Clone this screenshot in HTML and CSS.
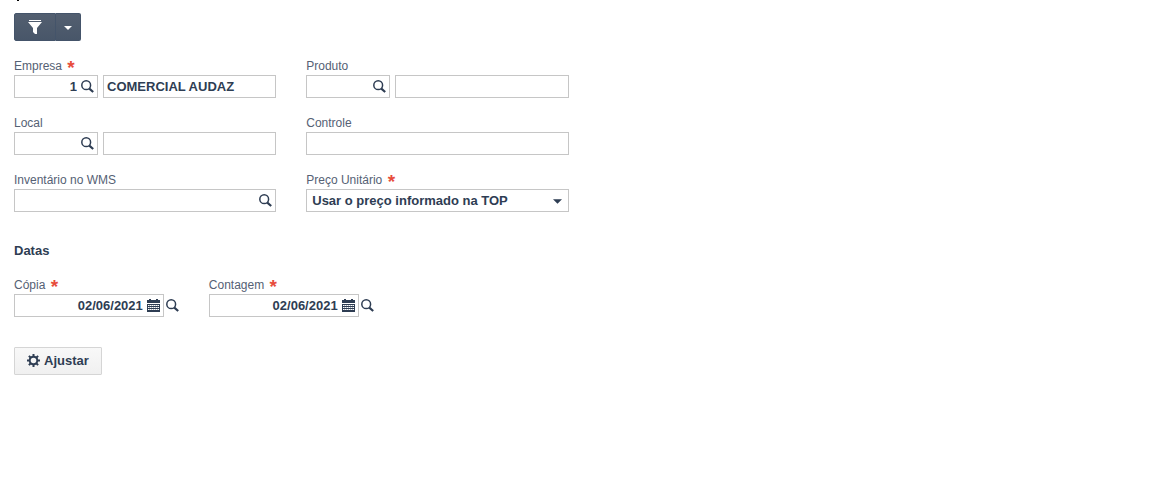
FILE: index.html
```html
<!DOCTYPE html>
<html lang="pt-BR">

<head>
    <meta charset="UTF-8">
    <meta name="viewport" content="width=device-width, initial-scale=1.0">
    <title>Ajuste de Estoque</title>
    <link rel="stylesheet" href="styles.css">
</head>

<body>
    <svg width="0" height="0" class="defs">
        <symbol id="search" viewBox="0 0 13 13">
            <circle cx="5.2" cy="5.2" r="4.4" fill="none" stroke="currentColor" stroke-width="1.5" />
            <path d="M8.3 8.6l3.9 3.4" fill="none" stroke="currentColor" stroke-width="2.2" />
        </symbol>
        <symbol id="calendar" viewBox="0 0 13 13">
            <path d="M0 1h2V0h2v1h5V0h2v1h2v3H0z" fill="currentColor" />
            <path d="M0 5h13v8H0z" fill="currentColor" />
            <path d="M1 6.5h11M1 8.5h11M1 10.5h11" stroke="#fff" stroke-width="1" stroke-dasharray="1.6 .4" />
        </symbol>
    </svg>

    <div class="mark"></div>

    <div class="toolbar">
        <button type="button" class="btn-dark btn-filter" aria-label="Filtro">
            <svg width="14" height="14" viewBox="0 0 14 14">
                <path d="M1 0h12v1H1zM0 2h14L9 8v6H7l-2-2V8z" fill="#fff" />
            </svg>
        </button>
        <button type="button" class="btn-dark btn-caret" aria-label="Mais filtros">
            <svg width="8" height="4" viewBox="0 0 8 4"><path d="M0 0h8L4 4z" fill="#fff" /></svg>
        </button>
    </div>

    <form>
        <div class="fields">
            <div class="field">
                <label for="empresa">Empresa <span class="req">*</span></label>
                <div class="pair">
                    <div class="box code">
                        <input type="text" id="empresa" class="right" value="1">
                        <button type="button" class="icon" aria-label="Pesquisar empresa"><svg><use href="#search" /></svg></button>
                    </div>
                    <div class="box"><input type="text" value="COMERCIAL AUDAZ" aria-label="Nome da empresa"></div>
                </div>
            </div>
            <div class="field">
                <label for="produto">Produto</label>
                <div class="pair">
                    <div class="box code">
                        <input type="text" id="produto" class="right">
                        <button type="button" class="icon" aria-label="Pesquisar produto"><svg><use href="#search" /></svg></button>
                    </div>
                    <div class="box"><input type="text" aria-label="Nome do produto"></div>
                </div>
            </div>
            <div class="field first">
                <label for="local">Local</label>
                <div class="pair">
                    <div class="box code">
                        <input type="text" id="local" class="right">
                        <button type="button" class="icon" aria-label="Pesquisar local"><svg><use href="#search" /></svg></button>
                    </div>
                    <div class="box"><input type="text" aria-label="Nome do local"></div>
                </div>
            </div>
            <div class="field">
                <label for="controle">Controle</label>
                <div class="box"><input type="text" id="controle"></div>
            </div>
            <div class="field first">
                <label for="inventario">Inventário no WMS</label>
                <div class="box">
                    <input type="text" id="inventario">
                    <button type="button" class="icon" aria-label="Pesquisar inventário"><svg><use href="#search" /></svg></button>
                </div>
            </div>
            <div class="field">
                <label for="preco">Preço Unitário <span class="req">*</span></label>
                <div class="box select">
                    <select id="preco">
                        <option>Usar o preço informado na TOP</option>
                    </select>
                    <svg class="arrow" viewBox="0 0 10 5"><path d="M0 0h10L5 5z" fill="currentColor" /></svg>
                </div>
            </div>
        </div>

        <h2>Datas</h2>

        <div class="dates">
            <div class="field">
                <label for="copia">Cópia <span class="req">*</span></label>
                <div class="date">
                    <div class="box">
                        <input type="text" id="copia" class="right" value="02/06/2021">
                        <button type="button" class="icon" aria-label="Calendário"><svg><use href="#calendar" /></svg></button>
                    </div>
                    <button type="button" class="icon" aria-label="Pesquisar cópia"><svg><use href="#search" /></svg></button>
                </div>
            </div>
            <div class="field">
                <label for="contagem">Contagem <span class="req">*</span></label>
                <div class="date">
                    <div class="box">
                        <input type="text" id="contagem" class="right" value="02/06/2021">
                        <button type="button" class="icon" aria-label="Calendário"><svg><use href="#calendar" /></svg></button>
                    </div>
                    <button type="button" class="icon" aria-label="Pesquisar contagem"><svg><use href="#search" /></svg></button>
                </div>
            </div>
        </div>

        <button type="button" class="btn">
            <svg width="13" height="13" viewBox="0 0 13 13">
                <circle cx="6.5" cy="6.5" r="3.8" fill="none" stroke="currentColor" stroke-width="2" />
                <path d="M6.5 0v3M6.5 10v3M0 6.5h3M10 6.5h3M1.9 1.9L4 4M9 9l2.1 2.1M1.9 11.1L4 9M9 4l2.1-2.1" stroke="currentColor" stroke-width="2" />
            </svg>
            Ajustar
        </button>
    </form>
</body>

</html>
```

FILE: styles.css
```css
* {
    box-sizing: border-box;
}

body {
    margin: 0;
    padding: 0 14px;
    background: #fff;
    color: #2e3d53;
    font-family: "Liberation Sans", Arial, sans-serif;
    font-size: 13px;
}

.defs {
    position: absolute;
}

/* tail of the clipped title */
.mark {
    width: 2px;
    height: 1px;
    margin-left: 3px;
    background: #000;
}

button {
    font-family: inherit;
    color: inherit;
    cursor: pointer;
}

.toolbar {
    display: flex;
    margin-top: 12px;
}

.btn-dark {
    display: flex;
    align-items: center;
    justify-content: center;
    height: 28px;
    padding: 0;
    border: 1px solid #44546a;
    background: linear-gradient(#535f70, #485669);
}

.btn-filter {
    width: 42px;
    border-radius: 2px 0 0 2px;
}

.btn-caret {
    width: 25px;
    border-left: 0;
    border-radius: 0 2px 2px 0;
}

.btn-caret svg {
    margin-top: 2px;
}

.fields {
    display: grid;
    grid-template-columns: repeat(4, 1fr);
    gap: 16px 30px;
    margin-top: 16px;
}

.first {
    grid-column-start: 1;
}

.field label {
    display: block;
    height: 18px;
    line-height: 18px;
    font-size: 12px;
    color: #556174;
}

.req {
    display: inline-block;
    margin-left: 2px;
    height: 18px;
    vertical-align: top;
    line-height: 22px;
    font-size: 19px;
    font-weight: bold;
    color: #e74c3c;
}

.pair {
    display: flex;
    gap: 5px;
}

.box {
    display: flex;
    align-items: center;
    flex: 1;
    min-width: 0;
    height: 23px;
    border: 1px solid #c6c6c6;
    background: #fff;
}

.code {
    flex: 0 0 84px;
}

.box input,
.box select {
    flex: 1;
    min-width: 0;
    width: 100%;
    height: 21px;
    padding: 0 3px;
    border: 0;
    outline: 0;
    background: transparent;
    color: inherit;
    font: bold 13px "Liberation Sans", Arial, sans-serif;
}

.box .right {
    padding-right: 4px;
    text-align: right;
}

.icon {
    display: flex;
    padding: 0;
    border: 0;
    background: none;
}

.icon svg {
    width: 13px;
    height: 13px;
}

.box .icon {
    margin-right: 3px;
}

.select {
    position: relative;
}

.box select {
    appearance: none;
    padding: 0 20px 0 5px;
}

.arrow {
    position: absolute;
    top: 9px;
    right: 6px;
    width: 9px;
    height: 5px;
    pointer-events: none;
}

h2 {
    margin: 31px 0 17px;
    line-height: 16px;
    font-size: 13px;
}

.dates {
    display: grid;
    grid-template-columns: repeat(6, 1fr);
    gap: 30px;
}

.date {
    display: flex;
    align-items: center;
    gap: 2px;
}

.btn {
    display: flex;
    align-items: center;
    gap: 4px;
    height: 28px;
    margin-top: 30px;
    padding: 0 12px 2px;
    border: 1px solid #d5d5d5;
    border-radius: 1px;
    background: linear-gradient(#f8f8f8, #f0f0f0);
    font-size: 13px;
    font-weight: bold;
}
```
